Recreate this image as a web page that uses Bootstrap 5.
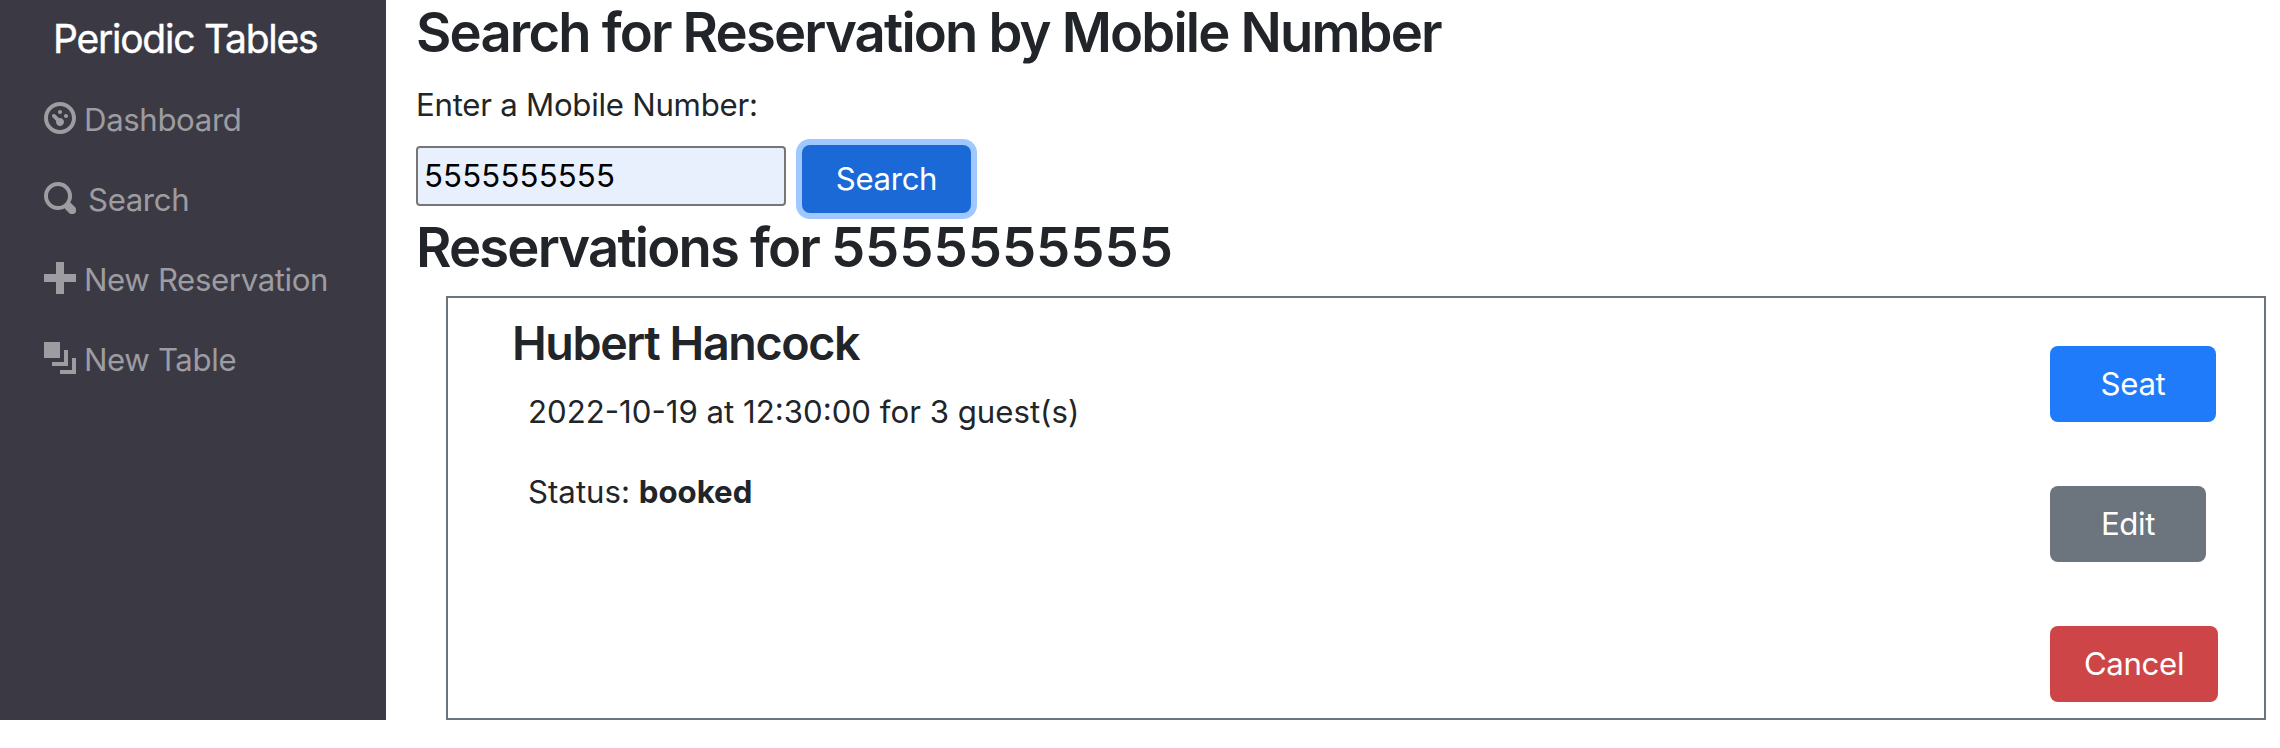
<!DOCTYPE html>
<html lang="en">
<head>
<meta charset="utf-8">
<title>Periodic Tables</title>
<link href="https://cdn.jsdelivr.net/npm/bootstrap@5.3.0/dist/css/bootstrap.min.css" rel="stylesheet">
<style>
body{font-family:Inter,"Liberation Sans",sans-serif;font-size:31.2px;line-height:48px;color:#212529;background:#fff}
.side{width:386px;height:720px;background:#3b3a44}
.brand-title{height:80px;font-size:39px;line-height:78px;padding-left:53px;color:#fff;letter-spacing:-1.24px;-webkit-text-stroke:.4px #fff}
.side .nav-link{height:80px;padding:16px 0 16px 44px;color:#9c9ca1;line-height:48px;letter-spacing:-.38px}
.side .nav-link svg{width:32px;height:32px;margin:-4px 8px 0 0;fill:currentColor;flex:none}
.side .nav-link .find-text{margin-left:4px}
.content-area{min-width:0;padding:0 14px 0 30px}
h1,h2{font-size:54.4px;line-height:64.4px;font-weight:600;margin:0;letter-spacing:-1.82px}
h2{margin-top:2px}
.phone{letter-spacing:0}
.lbl{margin:17px 0 16px;display:block;letter-spacing:-.26px}
.num{width:370px;height:60px;margin-top:1px;border:2px solid #767676;border-radius:4px;background:#e8f0fe;color:#000;padding:0 6px;margin-right:16px;letter-spacing:.15px}
.btn{font-size:31.2px;line-height:48px;border:0;border-radius:8px;color:#fff;letter-spacing:-.35px}
.btn-find{width:169px;height:68px;padding:0;background:#1b69d6;box-shadow:0 0 0 6px #9ec8ff}
.resv{height:424px;margin:16px 0 0 30px;border:2px solid #6c757d;padding:16px 0 0 64px}
h3{font-size:46.6px;line-height:58px;font-weight:600;margin:0 0 16px;letter-spacing:-1.4px}
.resv p{margin:0 0 32px 16px}
.acts{width:214px;padding-top:32px;gap:64px}
.acts .btn{height:76px;padding:14px 0}
.btn-seat{width:166px;background:#1f7bf9}
.btn-edit{width:156px;background:#6c757d}
.btn-cancel{width:168px;background:#ce4547}
</style>
</head>
<body>
<div class="d-flex">
<nav class="side flex-shrink-0">
<div class="brand-title">Periodic Tables</div>
<a class="nav-link d-flex align-items-center" href="#"><svg viewBox="0 0 8 8"><path d="M4 0c-2.200 0-4 1.800-4 4s1.800 4 4 4 4-1.800 4-4-1.800-4-4-4zm0 1c1.660 0 3 1.340 3 3s-1.340 3-3 3-3-1.340-3-3 1.340-3 3-3zm0 1c-.28 0-.5.220-.5.500s.220.500.500.500.500-.220.500-.500-.220-.500-.500-.500zm-1.660 1a.5.500 0 0 0-.19.840l.91.910c-.02.080-.06.160-.06.250 0 .55.450 1 1 1s1-.450 1-1-.450-1-1-1c-.09 0-.170.040-.25.060l-.91-.91a.5.500 0 0 0-.44-.16.5.500 0 0 0-.06 0zm3.160 0c-.28 0-.5.220-.5.500s.220.500.500.500.500-.220.500-.500-.220-.500-.500-.500z"/></svg><span>Dashboard</span></a>
<a class="nav-link d-flex align-items-center" href="#"><svg viewBox="0 0 8 8"><path d="M3.500 0c-1.930 0-3.500 1.570-3.500 3.500s1.570 3.500 3.500 3.500c.59 0 1.170-.14 1.660-.41a1 1 0 0 0 .13.130l1 1a1.020 1.020 0 1 0 1.440-1.440l-1-1a1 1 0 0 0-.16-.13c.27-.49.440-1.060.440-1.660 0-1.930-1.550-3.500-3.500-3.500zm0 1c1.390 0 2.500 1.110 2.500 2.500 0 .66-.24 1.270-.66 1.720l-.06.060a1 1 0 0 0-.13.130c-.44.4-1.030.590-1.660.590-1.390 0-2.500-1.110-2.500-2.500s1.100-2.500 2.500-2.500z"/></svg><span class="find-text">Search</span></a>
<a class="nav-link d-flex align-items-center" href="#"><svg viewBox="0 0 8 8"><path d="M3 0v3H0v2h3v3h2V5h3V3H5V0z"/></svg><span>New Reservation</span></a>
<a class="nav-link d-flex align-items-center" href="#"><svg viewBox="0 0 8 8"><path d="M0 0v4h4V0H0zm5 2v3H2v1h4V2H5zm2 2v3H4v1h4V4H7z"/></svg><span>New Table</span></a>
</nav>
<main class="content-area flex-grow-1">
<h1>Search for Reservation by Mobile Number</h1>
<label class="lbl" for="mobile">Enter a Mobile Number:</label>
<div class="d-flex align-items-start"><input class="num" id="mobile" value="5555555555"><button class="btn btn-find">Search</button></div>
<h2>Reservations for <span class="phone">5555555555</span></h2>
<div class="resv d-flex">
<div class="flex-grow-1">
<h3>Hubert Hancock</h3>
<p>2022-10-19 at 12:30:00 for 3 guest(s)</p>
<p>Status: <b>booked</b></p>
</div>
<div class="acts d-flex flex-column align-items-start">
<a class="btn btn-seat">Seat</a>
<a class="btn btn-edit">Edit</a>
<a class="btn btn-cancel">Cancel</a>
</div>
</div>
</main>
</div>
</body>
</html>
